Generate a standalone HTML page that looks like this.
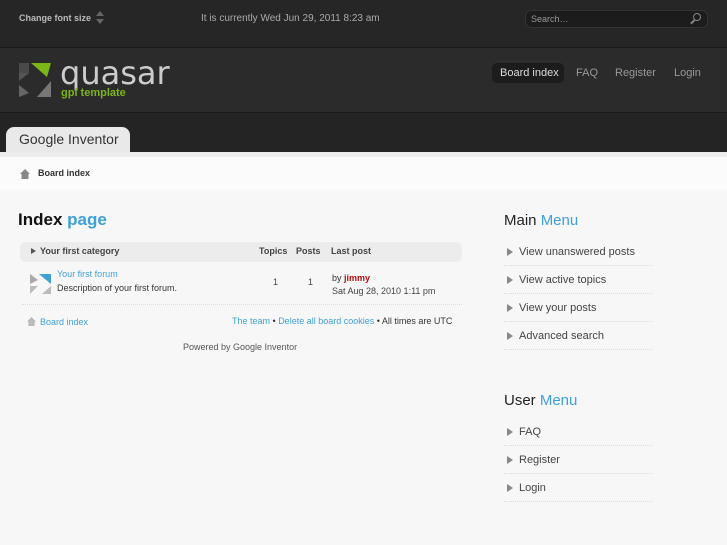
<!DOCTYPE html>
<html><head><style>
*{margin:0;padding:0;box-sizing:border-box}
body{width:727px;height:545px;overflow:hidden;background:#f7f7f7;font-family:"Liberation Sans",sans-serif;position:relative}
.a{position:absolute}
.top{left:0;top:0;width:727px;height:47px;background:#262626}
.bar{left:0;top:47px;width:727px;height:66px;background:#2b2b2b;border-top:1px solid #1a1a1a;border-bottom:1px solid #1a1a1a}
.tabs{left:0;top:113px;width:727px;height:39px;background:#242424}
.tab{left:6px;top:127px;width:124px;height:26px;background:#e9e9e9;border-radius:8px 8px 0 0;font-size:14px;color:#333;padding:4px 0 0 13px}
.bc{left:0;top:152px;width:727px;height:37px;background:#fbfbfb;border-top:5px solid #ececec}
.nav{font-size:11px;color:#999}
.mi{left:504px;width:148px;height:28px;border-bottom:1px dotted #ddd;font-size:11px;color:#444;padding-left:15px;line-height:28px}
.mi:before{content:"";position:absolute;left:3px;top:10px;border-left:6px solid #888;border-top:4px solid transparent;border-bottom:4px solid transparent}
.blue{color:#3fa0d8}
</style></head><body>
<div class="a top"></div>
<div class="a" style="left:19px;top:13px;font-size:9px;font-weight:bold;color:#bbb">Change font size</div>
<div class="a" style="left:96px;top:11px;border-bottom:5px solid #666;border-left:4px solid transparent;border-right:4px solid transparent"></div>
<div class="a" style="left:96px;top:19px;border-top:5px solid #666;border-left:4px solid transparent;border-right:4px solid transparent"></div>
<div class="a" style="left:201px;top:13px;font-size:10px;color:#aaa">It is currently Wed Jun 29, 2011 8:23 am</div>
<div class="a" style="left:525px;top:10px;width:183px;height:18px;background:#1c1c1c;border-radius:6px;border:1px solid #333;font-size:9px;color:#999;padding:3px 0 0 5px">Search…</div>
<div class="a" style="left:693px;top:13px;width:8px;height:8px;border:1.5px solid #888;border-radius:50%"></div>
<div class="a" style="left:690px;top:21px;width:5px;height:1.5px;background:#888;transform:rotate(-45deg)"></div>
<div class="a bar"></div>
<svg class="a" style="left:19px;top:63px" width="32" height="34"><polygon points="0,2 10,10 0,18" fill="#555"/><polygon points="12,0 32,0 28,14" fill="#7cb518"/><polygon points="16,8 28,20 16,32 4,20" fill="#2b2b2b"/><polygon points="0,22 10,30 0,34" fill="#666"/><polygon points="32,18 32,34 18,34" fill="#777"/><rect x="0" y="0" width="10" height="10" fill="#4a4a4a"/></svg>
<div class="a" style="left:60px;top:54px;font-size:32px;color:#ccc;letter-spacing:0px;font-family:'DejaVu Sans',sans-serif">quasar</div>
<div class="a" style="left:61px;top:87px;font-size:11px;font-weight:bold;color:#7cb518">gpl template</div>
<div class="a" style="left:492px;top:63px;width:72px;height:20px;background:#1c1c1c;border-radius:5px"></div>
<div class="a nav" style="left:500px;top:67px;color:#ddd">Board index</div>
<div class="a nav" style="left:576px;top:67px">FAQ</div>
<div class="a nav" style="left:615px;top:67px">Register</div>
<div class="a nav" style="left:674px;top:67px">Login</div>
<div class="a tabs"></div>
<div class="a tab">Google Inventor</div>
<div class="a bc"></div>
<div class="a" style="left:20px;top:169px;width:10px;height:10px;background:#888;clip-path:polygon(50% 0,100% 50%,85% 50%,85% 100%,15% 100%,15% 50%,0 50%)"></div>
<div class="a" style="left:38px;top:168px;font-size:9px;font-weight:bold;color:#333">Board index</div>
<div class="a" style="left:18px;top:210px;font-size:17px;font-weight:bold;color:#111">Index <span class="blue">page</span></div>
<div class="a" style="left:20px;top:242px;width:442px;height:20px;background:#ececec;border-radius:6px"></div>
<div class="a" style="left:31px;top:248px;border-left:5px solid #555;border-top:3px solid transparent;border-bottom:3px solid transparent"></div>
<div class="a" style="left:40px;top:246px;font-size:9px;font-weight:bold;color:#444">Your first category</div>
<div class="a" style="left:259px;top:246px;font-size:9px;font-weight:bold;color:#444">Topics</div>
<div class="a" style="left:296px;top:246px;font-size:9px;font-weight:bold;color:#444">Posts</div>
<div class="a" style="left:331px;top:246px;font-size:9px;font-weight:bold;color:#444">Last post</div>
<svg class="a" style="left:30px;top:274px" width="21" height="20"><polygon points="0,0 8,6 0,10" fill="#aaa"/><polygon points="9,0 21,0 21,10" fill="#3fa0d8"/><polygon points="0,12 8,12 0,20" fill="#bbb"/><polygon points="21,12 21,20 12,20" fill="#bbb"/></svg>
<div class="a blue" style="left:57px;top:269px;font-size:9px">Your first forum</div>
<div class="a" style="left:57px;top:283px;font-size:9px;color:#333">Description of your first forum.</div>
<div class="a" style="left:273px;top:277px;font-size:9px;color:#444">1</div>
<div class="a" style="left:308px;top:277px;font-size:9px;color:#444">1</div>
<div class="a" style="left:332px;top:273px;font-size:9px;color:#333">by <b style="color:#b01010">jimmy</b> <span style="color:#ccc">▫</span></div>
<div class="a" style="left:332px;top:286px;font-size:9px;color:#444">Sat Aug 28, 2010 1:11 pm</div>
<div class="a" style="left:22px;top:304px;width:440px;border-top:1px dotted #ddd"></div>
<div class="a" style="left:27px;top:317px;width:9px;height:9px;background:#bbb;clip-path:polygon(50% 0,100% 50%,85% 50%,85% 100%,15% 100%,15% 50%,0 50%)"></div>
<div class="a blue" style="left:40px;top:317px;font-size:9px">Board index</div>
<div class="a" style="left:232px;top:316px;font-size:9px;color:#333"><span class="blue">The team</span> • <span class="blue">Delete all board cookies</span> • All times are UTC</div>
<div class="a" style="left:183px;top:342px;font-size:9px;color:#555">Powered by Google Inventor</div>
<div class="a" style="left:504px;top:212px;font-size:15px;color:#222">Main <span class="blue">Menu</span></div>
<div class="a mi" style="top:238px">View unanswered posts</div>
<div class="a mi" style="top:266px">View active topics</div>
<div class="a mi" style="top:294px">View your posts</div>
<div class="a mi" style="top:322px">Advanced search</div>
<div class="a" style="left:504px;top:392px;font-size:15px;color:#222">User <span class="blue">Menu</span></div>
<div class="a mi" style="top:418px">FAQ</div>
<div class="a mi" style="top:446px">Register</div>
<div class="a mi" style="top:474px">Login</div>
</body></html>
